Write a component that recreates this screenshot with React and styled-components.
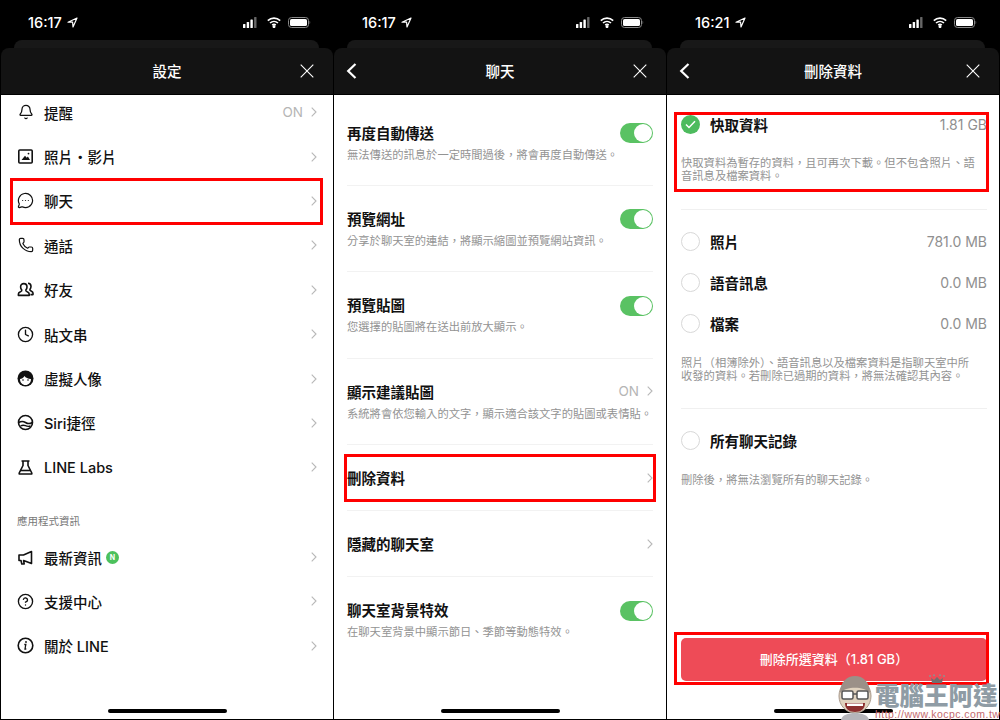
import React from "react";
import styled, { createGlobalStyle } from "styled-components";
import { Bell, Phone as PhoneIcon, Clock, CircleHelp, MessageCircleMore } from "lucide-react";

const Global = createGlobalStyle`
  html, body { margin: 0; background: #000; }
  body { font-family: Inter, "Noto Sans CJK TC", sans-serif; }
  * { box-sizing: border-box; }
`;

const Page = styled.div`
  position: relative;
  width: 1000px;
  height: 720px;
  display: grid;
  grid-template-columns: 333px 333px 334px;
  background: #000;
  overflow: hidden;
`;

const Phone = styled.section`
  height: 720px;
  display: flex;
  flex-direction: column;
  padding: 0 0 1px 1px;
  &:last-of-type { padding-right: 1px; }
`;

const Status = styled.div`
  height: 40px;
  flex: none;
  display: flex;
  align-items: center;
  padding: 4px 22px 0 ${(p) => (p.$first ? "27px" : "28px")};
  color: #fff;
  font-size: 14.5px;
  font-weight: 500;
`;

const Time = styled.span`
  margin-right: 5px;
`;

const StatusRight = styled.div`
  margin-left: auto;
  display: flex;
  align-items: center;
  gap: 7px;
`;

const BackTab = styled.div`
  height: 8px;
  flex: none;
  margin: 0 14px 0 13px;
  background: #181818;
  border-radius: 8px 8px 0 0;
`;

const Header = styled.header`
  position: relative;
  z-index: 1;
  height: 47px;
  flex: none;
  display: grid;
  grid-template-columns: 50px 1fr 50px;
  align-items: center;
  padding-bottom: 1px;
  background: #131313;
  border-radius: 8px 8px 0 0;
  border-bottom: 1px solid #000;
  color: #fff;
  font-size: 14.5px;
  font-weight: 500;
  text-align: center;
`;

const HeaderIcon = styled.div`
  display: flex;
  align-items: center;
  justify-content: ${(p) => (p.$end ? "flex-end" : "flex-start")};
  padding: ${(p) => (p.$end ? "0 19px 0 0" : "0 0 0 12px")};
`;

const Sheet = styled.div`
  flex: 1;
  min-height: 0;
  display: flex;
  flex-direction: column;
  background: #fff;
  color: #111;
`;

const MenuList = styled.div`
  margin-top: -5px;
`;

const MenuRow = styled.div`
  position: relative;
  height: 44.4px;
  display: flex;
  align-items: center;
  padding: 0 16px 0 16px;
  font-size: 14.5px;
  font-weight: 500;
`;

const MenuIcon = styled.div`
  width: 17px;
  height: 17px;
  margin-right: 10px;
  flex: none;
  display: flex;
  align-items: center;
  justify-content: center;
`;

const NewBadge = styled.span`
  width: 13px;
  height: 13px;
  margin-left: 4px;
  border-radius: 50%;
  background: #4cc15c;
  color: #fff;
  font-size: 7px;
  font-weight: 700;
  display: flex;
  align-items: center;
  justify-content: center;
`;

const Trail = styled.div`
  margin-left: auto;
  display: flex;
  align-items: center;
  gap: 8px;
  color: #b5b5b5;
  font-size: 13.5px;
  font-weight: 400;
`;

const SectionLabel = styled.div`
  height: 45.4px;
  padding: 25px 0 0 16px;
  color: #777;
  font-size: 10.5px;
  line-height: 14px;
`;

const Highlight = styled.div`
  position: absolute;
  border: 3px solid #f00;
  pointer-events: none;
`;

const ChatList = styled.div`
  padding: 4.6px 13px 0;
`;

const ChatRow = styled.div`
  position: relative;
  padding: 23px 0 ${(p) => (p.$tall ? "23.4px" : "23px")};
  border-bottom: ${(p) => (p.$last ? "none" : "1px solid #f2f2f2")};
`;

const ChatTitleLine = styled.div`
  display: flex;
  align-items: center;
  height: 19px;
  font-size: 14.5px;
  font-weight: 600;
`;

const ChatSub = styled.div`
  margin-top: 7px;
  height: 13px;
  color: #939393;
  font-size: 11.3px;
  line-height: 13px;
  white-space: nowrap;
`;

const Toggle = styled.div`
  width: 33px;
  height: 20px;
  margin: 2px 0 0 auto;
  padding: 1px;
  display: flex;
  justify-content: flex-end;
  border-radius: 10px;
  background: #5ac263;
`;

const Knob = styled.div`
  width: 18px;
  height: 18px;
  border-radius: 50%;
  background: #fff;
`;

const Group = styled.div`
  position: relative;
  margin: 0 12px 0 14px;
  padding: ${(p) => p.$pad};
  border-bottom: ${(p) => (p.$line ? "1px solid #f0f0f0" : "none")};
`;

const DataRow = styled.div`
  height: 41px;
  padding-bottom: 2px;
  display: flex;
  align-items: center;
  font-size: 14.5px;
  font-weight: 600;
`;

const Radio = styled.div`
  width: 19px;
  height: 19px;
  margin-right: 10px;
  flex: none;
  display: flex;
  align-items: center;
  justify-content: center;
  border-radius: 50%;
  border: ${(p) => (p.$on ? "none" : "1px solid #d8d8d8")};
  background: ${(p) => (p.$on ? "#4dbb5e" : "#fff")};
`;

const DataValue = styled.span`
  margin-left: auto;
  color: #8f8f8f;
  font-size: 14px;
  font-weight: 400;
`;

const DataDesc = styled.div`
  max-width: 298px;
  margin-top: ${(p) => p.$top || "12px"};
  color: #939393;
  font-size: 11.3px;
  line-height: 13px;
`;

const Footer = styled.div`
  position: relative;
  margin: auto 12px 0 14px;
`;

const DeleteButton = styled.div`
  height: 43px;
  padding-bottom: 2px;
  display: flex;
  align-items: center;
  justify-content: center;
  border-radius: 5px;
  background: #ee4b57;
  color: #fff;
  font-size: 13px;
  font-weight: 500;
`;

const HomeBar = styled.div`
  width: 119px;
  height: 4px;
  flex: none;
  margin: ${(p) => (p.$gap ? "28px" : "auto")} auto 6px;
  border-radius: 2px;
  background: #000;
`;

const Watermark = styled.div`
  position: absolute;
  right: 0;
  bottom: 0;
  width: 165px;
  height: 46px;
  display: flex;
  pointer-events: none;
`;

const FaceSvg = styled.svg`
  flex: none;
`;

const WatermarkText = styled.div`
  position: relative;
  width: 125px;
  padding-top: 10px;
`;

const WatermarkName = styled.div`
  color: #8f9ca5;
  font-size: 24.5px;
  font-weight: 900;
  line-height: 24px;
  white-space: nowrap;
`;

const WatermarkUrl = styled.div`
  margin-top: 1px;
  color: #c46a6e;
  font-family: "Liberation Sans", sans-serif;
  font-size: 10.5px;
  letter-spacing: .45px;
  line-height: 11px;
  white-space: nowrap;
`;

const Crown = styled.svg`
  position: absolute;
  left: 53px;
  top: 0;
`;

// little drawings
const Signal = () => (
  <svg width="17" height="11" viewBox="0 0 17 11">
    <rect x="0" y="7" width="2.4" height="4" rx=".6" fill="#fff" />
    <rect x="3.7" y="5" width="2.4" height="6" rx=".6" fill="#fff" />
    <rect x="7.4" y="2.5" width="2.4" height="8.5" rx=".6" fill="#fff" />
    <rect x="11.1" y="0" width="2.4" height="11" rx=".6" fill="#666" />
  </svg>
);

const Wifi = () => (
  <svg width="14" height="11" viewBox="0 0 14 11" fill="none" stroke="#fff" strokeWidth="1.6">
    <path d="M.8 3.7C4.4.3 9.6.3 13.2 3.7" />
    <path d="M3 6c2.3-2.1 5.7-2.1 8 0" />
    <path d="M5.2 8.2C6.2 7.3 7.8 7.3 8.8 8.2" />
    <circle cx="7" cy="9.6" r=".7" fill="#fff" />
  </svg>
);

const Battery = () => (
  <svg width="23" height="11" viewBox="0 0 23 11">
    <rect x=".5" y=".5" width="20" height="10" rx="3" fill="none" stroke="#888" />
    <rect x="2" y="2" width="17" height="7" rx="1.6" fill="#fff" />
    <path d="M21.6 3.8c.8.3.8 3.1 0 3.4z" fill="#888" />
  </svg>
);

const Arrow = () => (
  <svg width="11" height="11" viewBox="0 0 11 11" fill="none" stroke="#fff" strokeWidth="1.2" strokeLinejoin="round">
    <path d="M10 1 1 5.2h4.6L6 10z" />
  </svg>
);

const Close = () => (
  <svg width="14" height="14" viewBox="0 0 14 14" stroke="#fff" strokeWidth="1.1">
    <path d="M.7.7l12.6 12.6M13.3.7.7 13.3" />
  </svg>
);

const Back = () => (
  <svg width="11" height="16" viewBox="0 0 11 16" fill="none" stroke="#fff" strokeWidth="2.2">
    <path d="M9.5 1 2.2 8l7.3 7" />
  </svg>
);

const Chevron = () => (
  <svg width="6" height="10" viewBox="0 0 6 10" fill="none" stroke="#b8b8b8" strokeWidth="1.1">
    <path d="M.7.7 5 5 .7 9.3" />
  </svg>
);

const Check = () => (
  <svg width="11" height="9" viewBox="0 0 11 9" fill="none" stroke="#fff" strokeWidth="1.5">
    <path d="M1 4.5 4 7.5 10 1.2" />
  </svg>
);

const Svg = ({ children }) => (
  <svg width="17" height="17" viewBox="0 0 17 17" fill="none" stroke="#111" strokeWidth="1.6" strokeLinejoin="round">
    {children}
  </svg>
);

const PictureIcon = () => (
  <Svg>
    <rect x="1.8" y="2" width="13.4" height="13" rx="1" />
    <path d="M4.5 12 8 7.7l1.7 2 1.2-1.2L13 12z" fill="#111" stroke="none" />
    <circle cx="11.5" cy="5.6" r=".9" fill="#111" stroke="none" />
  </Svg>
);

const FriendsIcon = () => (
  <Svg>
    <path d="M6.8 2.6c-2 0-3.2 1.5-3.2 3.4 0 1.3.5 2.3 1.2 3 .2.8-.3 1.3-1.4 1.8-1 .4-2 1-2 2.2v1.4h10.8V13c0-1.2-1-1.8-2-2.2-1.1-.5-1.6-1-1.4-1.8.7-.7 1.2-1.7 1.2-3 0-1.9-1.2-3.4-3.2-3.4z" />
    <path d="M11 2.3c1.8 0 3 1.5 3 3.3 0 1.2-.4 2.1-1.1 2.8-.2.7.3 1.2 1.2 1.6.9.4 1.9 1 1.9 2v1.6h-2.6" />
  </Svg>
);

const AvatarIcon = () => (
  <svg width="17" height="17" viewBox="0 0 17 17">
    <circle cx="8.5" cy="8.5" r="8" fill="#111" />
    <path d="M3 9c1.5 0 3.5-1.2 4.5-3 1 1.6 3.6 3 6.5 3 0 3.5-2.3 6-5.5 6S3 12.5 3 9z" fill="#fff" />
    <circle cx="6" cy="10" r=".8" fill="#111" />
    <circle cx="11" cy="10" r=".8" fill="#111" />
  </svg>
);

const SiriIcon = () => (
  <Svg>
    <circle cx="8.5" cy="8.5" r="7" />
    <path d="M1.7 8.5c2.3-1.4 4.6-1.4 6.8 0s4.5 1.4 6.8 0" />
    <path d="M3.5 12c2-1.2 3.5-1 5-.3 1.7.8 3.3.8 5 .3" strokeWidth="1.4" />
  </Svg>
);

const FlaskIcon = () => (
  <Svg>
    <path d="M4.5 2h8M6 2v4.5L2.2 14v1h12.6v-1L11 6.5V2" />
    <path d="M3.5 11.5h10" />
  </Svg>
);

const MegaphoneIcon = () => (
  <Svg>
    <path d="M14.5 2.5 6.5 6H2v5.5h2l.8 3.5h2.4l-.6-3.5 7.9 3z" />
  </Svg>
);

const InfoIcon = () => (
  <svg width="17" height="17" viewBox="0 0 17 17" fill="none" stroke="#111">
    <circle cx="8.5" cy="8.5" r="7.3" strokeWidth="1.6" />
    <path d="M7.3 7.5h1.5l-.8 4.5h1.3" strokeWidth="1.3" />
    <circle cx="9" cy="5" r=".9" fill="#111" stroke="none" />
  </svg>
);

const Face = () => (
  <FaceSvg width="40" height="46" viewBox="0 0 40 46">
    <ellipse cx="20" cy="22" rx="16" ry="17" fill="#e0d2bf" stroke="#a8988a" />
    <path d="M5 19C5 8 12 2 20 2s15 6 15 17c-6-7-24-7-30 0z" fill="#9b9088" />
    <rect x="7" y="17" width="11" height="8" rx="1.5" fill="#fff" stroke="#555" strokeWidth="1.5" />
    <rect x="22" y="17" width="11" height="8" rx="1.5" fill="#fff" stroke="#555" strokeWidth="1.5" />
    <path d="M18 20h4" stroke="#555" strokeWidth="1.5" />
    <path d="M10 29h20c0 6-4 9-10 9s-10-3-10-9z" fill="#8c2f2f" />
    <path d="M12 29.5h16v2.500H12z" fill="#fff" />
    <path d="M6 46c1-5 7-7 14-7s13 2 14 7z" fill="#b5b5ba" />
  </FaceSvg>
);

const menuOne = [
  { label: "提醒", icon: <Bell size={16} color="#111" strokeWidth={1.9} />, trail: "ON" },
  { label: "照片・影片", icon: <PictureIcon /> },
  { label: "聊天", icon: <MessageCircleMore size={17} color="#111" strokeWidth={1.7} />, mark: true },
  { label: "通話", icon: <PhoneIcon size={16} color="#111" strokeWidth={1.8} /> },
  { label: "好友", icon: <FriendsIcon /> },
  { label: "貼文串", icon: <Clock size={17} color="#111" strokeWidth={1.9} /> },
  { label: "虛擬人像", icon: <AvatarIcon /> },
  { label: "Siri捷徑", icon: <SiriIcon /> },
  { label: "LINE Labs", icon: <FlaskIcon /> },
];

const menuTwo = [
  { label: "最新資訊", icon: <MegaphoneIcon />, badge: true },
  { label: "支援中心", icon: <CircleHelp size={17} color="#111" strokeWidth={1.9} /> },
  { label: "關於 LINE", icon: <InfoIcon /> },
];

const chats = [
  { title: "再度自動傳送", sub: "無法傳送的訊息於一定時間過後，將會再度自動傳送。", toggle: true },
  { title: "預覽網址", sub: "分享於聊天室的連結，將顯示縮圖並預覽網站資訊。", toggle: true },
  { title: "預覽貼圖", sub: "您選擇的貼圖將在送出前放大顯示。", toggle: true },
  { title: "顯示建議貼圖", sub: "系統將會依您輸入的文字，顯示適合該文字的貼圖或表情貼。", on: true },
  { title: "刪除資料", chevron: true, mark: true },
  { title: "隱藏的聊天室", chevron: true },
  { title: "聊天室背景特效", sub: "在聊天室背景中顯示節日、季節等動態特效。", toggle: true, last: true },
];

function Top({ time, title, back, first }) {
  return (
    <>
      <Status $first={first}>
        <Time>{time}</Time>
        <Arrow />
        <StatusRight>
          <Signal />
          <Wifi />
          <Battery />
        </StatusRight>
      </Status>
      <BackTab />
      <Header>
        <HeaderIcon>{back && <Back />}</HeaderIcon>
        <span>{title}</span>
        <HeaderIcon $end>
          <Close />
        </HeaderIcon>
      </Header>
    </>
  );
}

function MenuItem({ item }) {
  return (
    <MenuRow>
      <MenuIcon>{item.icon}</MenuIcon>
      {item.label}
      {item.badge && <NewBadge>N</NewBadge>}
      <Trail>
        {item.trail}
        <Chevron />
      </Trail>
      {item.mark && <Highlight style={{ left: 9, right: 10, top: -1, bottom: -2 }} />}
    </MenuRow>
  );
}

function DataItem({ label, value, on }) {
  return (
    <DataRow>
      <Radio $on={on}>{on && <Check />}</Radio>
      {label}
      <DataValue>{value}</DataValue>
    </DataRow>
  );
}

export default function App() {
  return (
    <Page>
      <Global />
      <Phone>
        <Top time="16:17" title="設定" first />
        <Sheet>
          <MenuList>
            {menuOne.map((m) => (
              <MenuItem key={m.label} item={m} />
            ))}
            <SectionLabel>應用程式資訊</SectionLabel>
            {menuTwo.map((m) => (
              <MenuItem key={m.label} item={m} />
            ))}
          </MenuList>
          <HomeBar />
        </Sheet>
      </Phone>

      <Phone>
        <Top time="16:17" title="聊天" back />
        <Sheet>
          <ChatList>
            {chats.map((c) => (
              <ChatRow key={c.title} $tall={!!c.sub} $last={c.last}>
                <ChatTitleLine>
                  {c.title}
                  {c.toggle && (
                    <Toggle>
                      <Knob />
                    </Toggle>
                  )}
                  {c.on && (
                    <Trail>
                      ON
                      <Chevron />
                    </Trail>
                  )}
                  {c.chevron && (
                    <Trail>
                      <Chevron />
                    </Trail>
                  )}
                </ChatTitleLine>
                {c.sub && <ChatSub>{c.sub}</ChatSub>}
                {c.mark && <Highlight style={{ left: -3, right: -3, top: 9, bottom: 8 }} />}
              </ChatRow>
            ))}
          </ChatList>
          <HomeBar />
        </Sheet>
      </Phone>

      <Phone>
        <Top time="16:21" title="刪除資料" back />
        <Sheet>
          <Group $pad="9.5px 0 26.5px" $line>
            <DataItem label="快取資料" value="1.81 GB" on />
            <DataDesc $top="11px">快取資料為暫存的資料，且可再次下載。但不包含照片、語音訊息及檔案資料。</DataDesc>
            <Highlight style={{ left: -7, right: -2, top: 17, bottom: 17 }} />
          </Group>
          <Group $pad="11.5px 0 25.5px" $line>
            <DataItem label="照片" value="781.0 MB" />
            <DataItem label="語音訊息" value="0.0 MB" />
            <DataItem label="檔案" value="0.0 MB" />
            <DataDesc>照片（相簿除外）、語音訊息以及檔案資料是指聊天室中所收發的資料。若刪除已過期的資料，將無法確認其內容。</DataDesc>
          </Group>
          <Group $pad="11.5px 0 0">
            <DataItem label="所有聊天記錄" />
            <DataDesc>刪除後，將無法瀏覽所有的聊天記錄。</DataDesc>
          </Group>
          <Footer>
            <DeleteButton>刪除所選資料（1.81 GB）</DeleteButton>
            <Highlight style={{ left: -7, right: -2, top: -6, bottom: -4 }} />
          </Footer>
          <HomeBar $gap />
        </Sheet>
      </Phone>

      <Watermark>
        <Face />
        <WatermarkText>
          <Crown width="18" height="9" viewBox="0 0 18 9">
            <path d="M3 4l3 2 3-3 3 3 3-2-1 5H4z" fill="#6f6f6f" />
            <circle cx="2" cy="2" r="1" fill="#8f8f8f" />
            <circle cx="6" cy="1.2" r="1" fill="#8f8f8f" />
            <circle cx="12" cy="1.2" r="1" fill="#8f8f8f" />
            <circle cx="16" cy="2" r="1" fill="#8f8f8f" />
          </Crown>
          <WatermarkName>電腦王阿達</WatermarkName>
          <WatermarkUrl>http://www.kocpc.com.tw</WatermarkUrl>
        </WatermarkText>
      </Watermark>
    </Page>
  );
}
